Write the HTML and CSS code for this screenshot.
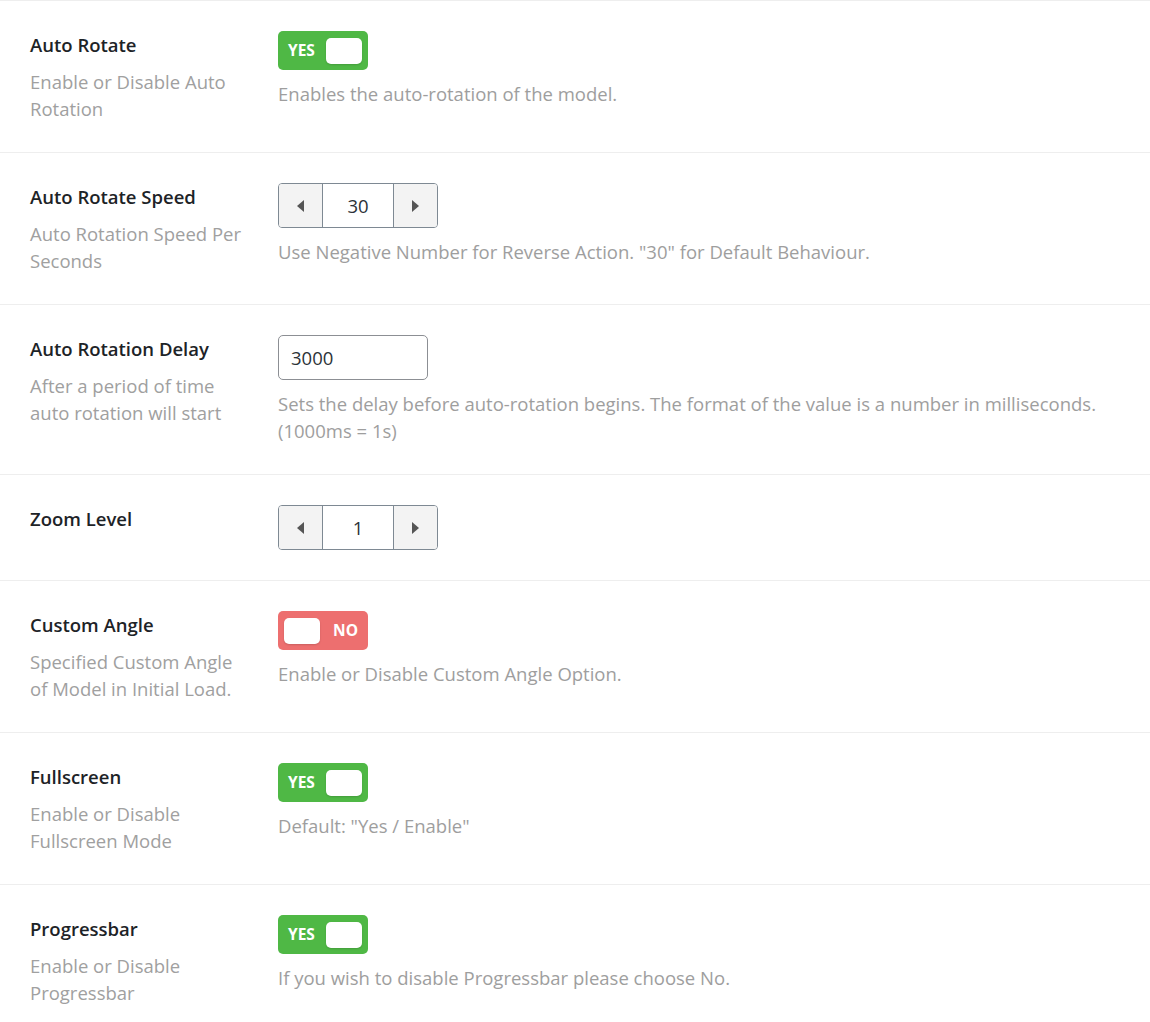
FILE: index.html
```html
<!DOCTYPE html>
<html>
<head>
<meta charset="utf-8">
<link rel="stylesheet" href="styles.css">
</head>
<body>
<div class="fields">
  <div class="field">
    <div class="title"><h4>Auto Rotate</h4><div class="subtitle">Enable or Disable Auto Rotation</div></div>
    <div class="content">
      <div class="switch on"><span class="label">YES</span><span class="knob"></span></div>
      <div class="desc">Enables the auto-rotation of the model.</div>
    </div>
  </div>
  <div class="field">
    <div class="title"><h4>Auto Rotate Speed</h4><div class="subtitle">Auto Rotation Speed Per Seconds</div></div>
    <div class="content">
      <div class="spinner"><span class="btn"><span class="arrow left"></span></span><span class="value">30</span><span class="btn"><span class="arrow right"></span></span></div>
      <div class="desc">Use Negative Number for Reverse Action. "30" for Default Behaviour.</div>
    </div>
  </div>
  <div class="field">
    <div class="title"><h4>Auto Rotation Delay</h4><div class="subtitle">After a period of time auto rotation will start</div></div>
    <div class="content">
      <div class="text-input">3000</div>
      <div class="desc">Sets the delay before auto-rotation begins. The format of the value is a number in milliseconds. (1000ms = 1s)</div>
    </div>
  </div>
  <div class="field">
    <div class="title"><h4>Zoom Level</h4></div>
    <div class="content">
      <div class="spinner"><span class="btn"><span class="arrow left"></span></span><span class="value">1</span><span class="btn"><span class="arrow right"></span></span></div>
    </div>
  </div>
  <div class="field">
    <div class="title"><h4>Custom Angle</h4><div class="subtitle">Specified Custom Angle of Model in Initial Load.</div></div>
    <div class="content">
      <div class="switch off"><span class="knob"></span><span class="label">NO</span></div>
      <div class="desc">Enable or Disable Custom Angle Option.</div>
    </div>
  </div>
  <div class="field">
    <div class="title"><h4>Fullscreen</h4><div class="subtitle">Enable or Disable Fullscreen Mode</div></div>
    <div class="content">
      <div class="switch on"><span class="label">YES</span><span class="knob"></span></div>
      <div class="desc">Default: "Yes / Enable"</div>
    </div>
  </div>
  <div class="field">
    <div class="title"><h4>Progressbar</h4><div class="subtitle">Enable or Disable Progressbar</div></div>
    <div class="content">
      <div class="switch on"><span class="label">YES</span><span class="knob"></span></div>
      <div class="desc">If you wish to disable Progressbar please choose No.</div>
    </div>
  </div>
</div>
</body>
</html>
```
FILE: styles.css
```css
html, body {
  margin: 0;
  padding: 0;
  background: #fff;
}
body {
  font-family: "Open Sans", "Noto Sans", sans-serif;
  font-size: 18.5px;
  line-height: 27px;
  color: #1d2327;
}
.fields {
  border-top: 1px solid #eeeeee;
}
.field {
  display: grid;
  grid-template-columns: 218px 1fr;
  column-gap: 30px;
  padding: 30px 30px 30px 30px;
  border-bottom: 1px solid #eeeeee;
}
.title h4 {
  margin: 0;
  font-size: 18.5px;
  font-weight: 600;
  line-height: 27px;
  color: #1d2327;
}
.subtitle {
  margin-top: 10px;
  color: #a0a0a0;
}
.desc {
  margin-top: 10px;
  color: #9e9e9e;
}
.switch {
  position: relative;
  width: 90px;
  height: 39px;
  border-radius: 5px;
  display: flex;
  align-items: center;
  box-sizing: border-box;
  color: #fff;
  font-weight: 700;
  font-size: 15.5px;
}
.switch.on {
  background: #4fb845;
  padding: 0 6px 0 10px;
  justify-content: space-between;
}
.switch.off {
  background: #ed6f6f;
  padding: 0 10px 0 6px;
  justify-content: space-between;
}
.knob {
  width: 36px;
  height: 26px;
  background: #fff;
  border-radius: 5px;
  box-shadow: 0 1px 2px rgba(0,0,0,0.15);
}
.spinner {
  display: flex;
  width: 160px;
  height: 45px;
  box-sizing: border-box;
  border: 1px solid #7e8993;
  border-radius: 4px;
  overflow: hidden;
}
.spinner .btn {
  width: 43px;
  background: #f3f3f3;
  display: flex;
  align-items: center;
  justify-content: center;
}
.spinner .btn:first-child { border-right: 1px solid #7e8993; }
.spinner .btn:last-child { border-left: 1px solid #7e8993; }
.spinner .value {
  flex: 1;
  display: flex;
  align-items: center;
  justify-content: center;
  color: #2c3338;
}
.arrow {
  width: 0;
  height: 0;
  border-top: 6px solid transparent;
  border-bottom: 6px solid transparent;
}
.arrow.left { border-right: 7px solid #555; }
.arrow.right { border-left: 7px solid #555; }
.text-input {
  width: 150px;
  height: 45px;
  box-sizing: border-box;
  border: 1px solid #8c8f94;
  border-radius: 5px;
  padding: 0 12px;
  display: flex;
  align-items: center;
  color: #2c3338;
}
```
